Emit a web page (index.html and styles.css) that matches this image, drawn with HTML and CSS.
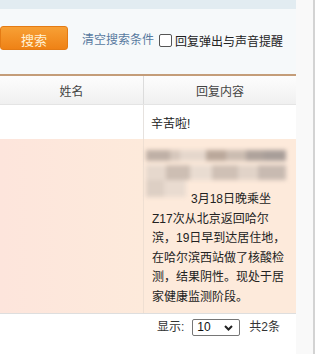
FILE: index.html
```html
<!DOCTYPE html>
<html lang="zh-CN">
<head>
<meta charset="utf-8">
<title>回复列表</title>
<link rel="stylesheet" href="styles.css">
</head>
<body>
<div class="page">
  <div class="main">
    <div class="topband"></div>
    <div class="toolbar">
      <button class="btn" type="button">搜索</button>
      <a class="link" href="#">清空搜索条件</a>
      <label class="opt"><span class="chk"></span>回复弹出与声音提醒</label>
    </div>
    <div class="grid-head">
      <div class="th">姓名</div>
      <div class="th th2">回复内容</div>
    </div>
    <div class="row r1">
      <div class="cell"></div>
      <div class="cell c2">辛苦啦!</div>
    </div>
    <div class="row r2">
      <div class="cell c1"></div>
      <div class="cell c2 msgcell">
        <div class="mosaic">
          <div class="bar b1"></div>
          <div class="bar b2"></div>
          <div class="bar b3"></div>
        </div>
        <p class="msg">3月18日晚乘坐<br>Z17次从北京返回哈尔<br>滨，19日早到达居住地，<br>在哈尔滨西站做了核酸检<br>测，结果阴性。现处于居<br>家健康监测阶段。</p>
      </div>
    </div>
    <div class="pager">
      <span class="lbl">显示:</span>
      <div class="select"><span>10</span><svg class="chev" width="9" height="6" viewBox="0 0 9 6"><path d="M1 1 L4.5 4.5 L8 1" fill="none" stroke="#222" stroke-width="2"/></svg></div>
      <span class="total">共2条</span>
    </div>
  </div>
  <div class="gutter"></div>
</div>
</body>
</html>
```
FILE: styles.css
```css
html, body {
  margin: 0;
  padding: 0;
  background: #fff;
}
body {
  font-family: "Liberation Sans", "Noto Sans CJK SC", sans-serif;
  font-size: 12px;
  color: #333;
}
.page {
  display: flex;
  width: 320px;
  height: 354px;
  overflow: hidden;
}
.main {
  width: 296px;
  flex: none;
}
.gutter {
  width: 17px;
  flex: none;
  background: #f9f9f9;
  border-right: 2px solid #d3d3d3;
}
.topband {
  height: 9px;
  background: #e2ecf1;
}
.toolbar {
  height: 65px;
  box-sizing: border-box;
  padding-top: 17px;
  display: flex;
  align-items: flex-start;
  background: #f6f9fa;
}
.btn {
  width: 68px;
  height: 24px;
  margin: 0;
  padding: 0;
  border: 1px solid #e47b14;
  border-radius: 3px;
  background: linear-gradient(#f7a035, #ef8216);
  color: #fff1d6;
  font-family: "Liberation Sans", "Noto Sans CJK SC", sans-serif;
  font-size: 13px;
  line-height: 24px;
  padding-top: 2px;
}
.link {
  margin-left: 14px;
  line-height: 28px;
  color: #587a9f;
  text-decoration: none;
}
.opt {
  display: flex;
  align-items: center;
  height: 28px;
  margin-left: 5px;
  color: #222;
}
.chk {
  width: 11px;
  height: 11px;
  border: 1px solid #555;
  border-radius: 2px;
  background: #fff;
  margin-right: 3px;
}
.grid-head {
  display: grid;
  grid-template-columns: 143px 153px;
  height: 28px;
  border-top: 2px solid #c49d79;
  border-bottom: 1px solid #e4e4e4;
  background: linear-gradient(#fdfdfd, #f0f0f0);
}
.th {
  display: flex;
  align-items: center;
  justify-content: center;
  color: #444;
}
.th2 {
  border-left: 1px solid #dcdcdc;
}
.row {
  display: grid;
  grid-template-columns: 143px 153px;
}
.r1 {
  height: 34px;
  background: #fff;
}
.r1 .c2 {
  display: flex;
  align-items: center;
  padding-left: 7px;
  color: #222;
}
.c2 {
  border-left: 1px solid #e6e2df;
}
.r2 {
  height: 174px;
  border-bottom: 1px solid #dedede;
}
.r2 .c1 {
  background: linear-gradient(90deg, #fde5dc, #fdeadb);
}
.msgcell {
  background: #fdeadb;
  padding: 11px 8px 0 8px;
  border-left-color: #efdfd2;
}
.mosaic {
  margin-left: -6px;
  filter: blur(2px);
}
.bar {
  width: 140px;
}
.b1 {
  height: 11px;
  margin-bottom: 4px;
  background: linear-gradient(90deg,
    #bfb0a6 0, #bfb0a6 24px,
    #d6c7bc 24px, #d6c7bc 34px,
    #e5d7cc 34px, #e5d7cc 60px,
    #baa89b 60px, #baa89b 80px,
    #cbbcb1 80px, #cbbcb1 100px,
    #afa39c 100px, #afa39c 118px,
    #a89e99 118px, #a89e99 140px);
}
.b2 {
  height: 15px;
  background: linear-gradient(90deg,
    #e6d8cd 0, #e6d8cd 20px,
    #cdbeb3 20px, #cdbeb3 44px,
    #e9dcd1 44px, #e9dcd1 66px,
    #cfc0b5 66px, #cfc0b5 92px,
    #e1d3c8 92px, #e1d3c8 112px,
    #c8bab1 112px, #c8bab1 140px);
}
.b3 {
  width: 40px;
  height: 17px;
  margin-bottom: -7px;
  background: linear-gradient(90deg, #ddcfc4 0, #ddcfc4 18px, #e9dbd0 18px, #e9dbd0 40px);
}
.msg {
  margin: 0;
  line-height: 19.5px;
  text-indent: 39px;
  color: #222;
  white-space: nowrap;
}
.pager {
  height: 40px;
  box-sizing: border-box;
  padding-top: 5px;
  padding-right: 16px;
  display: flex;
  align-items: flex-start;
  justify-content: flex-end;
  color: #333;
}
.lbl,
.total {
  line-height: 17px;
}
.select {
  width: 48px;
  height: 17px;
  box-sizing: border-box;
  margin: 0 9px 0 8px;
  border: 1px solid #767676;
  border-radius: 2px;
  background: #fff;
  display: flex;
  align-items: center;
  justify-content: space-between;
  padding: 0 6px 0 4px;
  line-height: 15px;
  color: #111;
}
.chev {
  display: block;
}
```
